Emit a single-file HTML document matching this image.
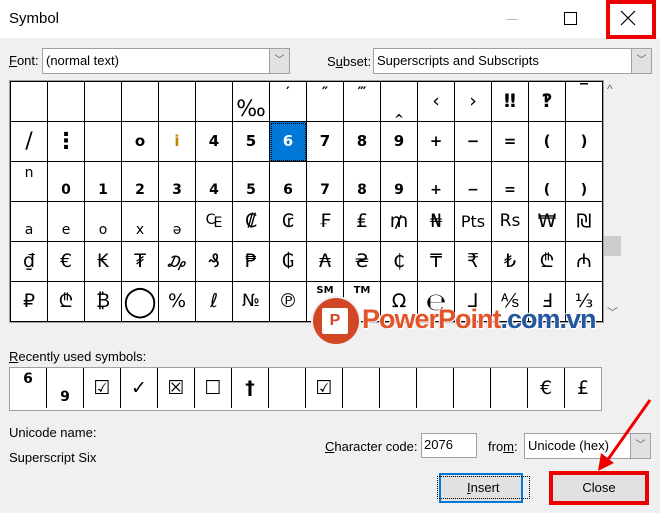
<!DOCTYPE html><html><head><style>
body{margin:0;width:660px;height:513px;background:#f0f0f0;font-family:"Liberation Sans","DejaVu Sans",sans-serif;font-size:12px;color:#000;position:relative;overflow:hidden}
.a{position:absolute}
.title{left:0;top:0;width:660px;height:38px;background:#fff}
table{border-collapse:collapse;table-layout:fixed}
td{border:1px solid #000;width:36px;height:39px;line-height:1;text-align:center;font-family:"DejaVu Sans",sans-serif;font-size:19px;padding:0;overflow:hidden}
td.s{font-size:14px;vertical-align:bottom;padding-bottom:4px;height:35px;font-weight:bold}
td.u{font-size:14px;vertical-align:top;padding-top:4px;height:35px;font-weight:bold}
td.m{font-size:15px;font-weight:bold}
.dd{background:#fff;border:1px solid #a0a0a0;height:24px;line-height:23px;padding-left:3px;font-size:13px}
.arr{position:absolute;right:0;top:0;width:19px;height:24px;background:#e1e1e1;border-left:1px solid #a0a0a0;text-align:center;color:#555;font-size:10px}
u{text-decoration:underline}
.r td{border-top:0;border-bottom:0;height:40px}
.r td.s,.r td.u{height:36px}
</style></head><body>
<div class="a title"></div>
<div class="a" style="left:9px;top:10px;font-size:15px">Symbol</div>
<div class="a" style="left:506px;top:19px;width:12px;height:1px;background:#bbb"></div>
<div class="a" style="left:564px;top:12px;width:11px;height:11px;border:1px solid #000"></div>
<div class="a" style="left:606px;top:0;width:42px;height:31px;border:4px solid #e00"></div>
<svg class="a" style="left:620px;top:10px" width="16" height="16"><path d="M1 1L15 15M15 1L1 15" stroke="#000" stroke-width="1.2"/></svg>

<div class="a" style="left:9px;top:53px;font-size:13px"><u>F</u>ont:</div>
<div class="a dd" style="left:42px;top:48px;width:243px">(normal text)<div class="arr">﹀</div></div>
<div class="a" style="left:327px;top:54px;font-size:13px">S<u>u</u>bset:</div>
<div class="a dd" style="left:373px;top:48px;width:274px">Superscripts and Subscripts<div class="arr">﹀</div></div>

<div class="a" style="left:9px;top:80px;height:241px;overflow:hidden;background:#fff;border:1px solid #a0a0a0">
<table style="border-bottom:1px solid #000">
<tr><td></td><td></td><td></td><td></td><td></td><td></td><td style="font-size:22px;vertical-align:bottom">‰</td><td class="u">′</td><td class="u">″</td><td class="u">‴</td><td class="s">‸</td><td>‹</td><td>›</td><td style="font-weight:bold">‼</td><td style="font-weight:bold">‽</td><td style="vertical-align:top;font-size:16px;font-weight:bold">‾</td></tr>
<tr><td style="font-size:22px">/</td><td style="font-weight:bold;font-size:22px">⋮</td><td></td><td class="m">o</td><td class="m" style="color:#b80">i</td><td class="m">4</td><td class="m">5</td><td class="m" style="background:#0078d7;color:#fff;outline:1px dotted #000;outline-offset:-2px">6</td><td class="m">7</td><td class="m">8</td><td class="m">9</td><td class="m">+</td><td class="m">−</td><td class="m">=</td><td class="m">(</td><td class="m">)</td></tr>
<tr><td class="u" style="font-weight:normal">n</td><td class="s">0</td><td class="s">1</td><td class="s">2</td><td class="s">3</td><td class="s">4</td><td class="s">5</td><td class="s">6</td><td class="s">7</td><td class="s">8</td><td class="s">9</td><td class="s">+</td><td class="s">−</td><td class="s">=</td><td class="s">(</td><td class="s">)</td></tr>
<tr><td class="s" style="font-weight:normal">a</td><td class="s" style="font-weight:normal">e</td><td class="s" style="font-weight:normal">o</td><td class="s" style="font-weight:normal">x</td><td class="s" style="font-weight:normal">ə</td><td>₠</td><td>₡</td><td>₢</td><td>₣</td><td>₤</td><td>₥</td><td>₦</td><td style="font-size:16px">Pts</td><td style="font-size:17px">Rs</td><td>₩</td><td>₪</td></tr>
<tr><td>₫</td><td>€</td><td>₭</td><td>₮</td><td style="font-size:16px;font-style:italic">₯</td><td>₰</td><td>₱</td><td>₲</td><td>₳</td><td>₴</td><td>₵</td><td>₸</td><td>₹</td><td>₺</td><td>₾</td><td>₼</td></tr>
<tr><td>₽</td><td>₾</td><td>₿</td><td style="font-size:30px">◯</td><td>%</td><td>ℓ</td><td style="font-size:17px">№</td><td>℗</td><td class="u" style="font-size:10px">SM</td><td class="u" style="font-size:10px">TM</td><td>Ω</td><td style="font-size:24px">℮</td><td>⅃</td><td>⅍</td><td>Ⅎ</td><td>⅓</td></tr>
</table></div>
<div class="a" style="left:607px;top:82px;color:#666;font-size:12px">^</div>
<div class="a" style="left:604px;top:236px;width:17px;height:20px;background:#cdcdcd"></div>
<div class="a" style="left:607px;top:304px;color:#666;font-size:11px">﹀</div>

<div class="a" style="left:313px;top:298px;width:46px;height:46px;border-radius:50%;background:#d24726;box-shadow:0 0 0 2px #f0f0f0"></div>
<div class="a" style="left:322px;top:308px;width:26px;height:26px;background:#fff;border-radius:2px;color:#d24726;font-weight:bold;font-size:16px;text-align:center;line-height:26px">P</div>
<div class="a" style="left:362px;top:304px;font-size:27px;font-weight:bold;letter-spacing:-1px;color:#e2552b;text-shadow:1px 1px 0 #fff,-1px -1px 0 #fff">PowerPoint<span style="color:#24579f">.com.vn</span></div>

<div class="a" style="left:9px;top:349px;font-size:13px"><u>R</u>ecently used symbols:</div>
<div class="a" style="left:9px;top:367px;height:42px;overflow:hidden;background:#fff;border:1px solid #a0a0a0">
<table class="r"><tr>
<td class="u" style="border-left:0">6</td><td class="s">9</td><td>☑</td><td>✓</td><td>☒</td><td>☐</td><td style="font-weight:bold">†</td><td></td><td style="font-weight:bold">☑</td><td style="border:0"></td><td></td><td></td><td></td><td></td><td>€</td><td style="border-right:0">£</td>
</tr></table></div>

<div class="a" style="left:9px;top:425px;font-size:13px">Unicode name:</div>
<div class="a" style="left:9px;top:450px;font-size:13px">Superscript Six</div>
<div class="a" style="left:325px;top:439px;font-size:13px"><u>C</u>haracter code:</div>
<div class="a" style="left:421px;top:433px;width:52px;height:23px;background:#fff;border:1px solid #a0a0a0;font-size:13px;line-height:22px;padding-left:2px">2076</div>
<div class="a" style="left:488px;top:439px;font-size:13px">fro<u>m</u>:</div>
<div class="a dd" style="left:524px;top:433px;width:122px">Unicode (hex)<div class="arr">﹀</div></div>

<div class="a" style="left:439px;top:473px;width:80px;height:26px;background:#e1e1e1;border:2px solid #0078d7;text-align:center;line-height:26px;font-size:13px"><span style="outline:1px dotted #000;outline-offset:3px;padding:0 26px"><u>I</u>nsert</span></div>
<div class="a" style="left:549px;top:471px;width:92px;height:26px;background:#e1e1e1;border:4px solid #e00;text-align:center;line-height:26px;font-size:13px">Close</div>
<svg class="a" style="left:590px;top:395px" width="70" height="80"><path d="M60 5L14 70" stroke="#e00" stroke-width="3"/><path d="M8 76L11 58L24 68Z" fill="#e00"/></svg>
</body></html>
